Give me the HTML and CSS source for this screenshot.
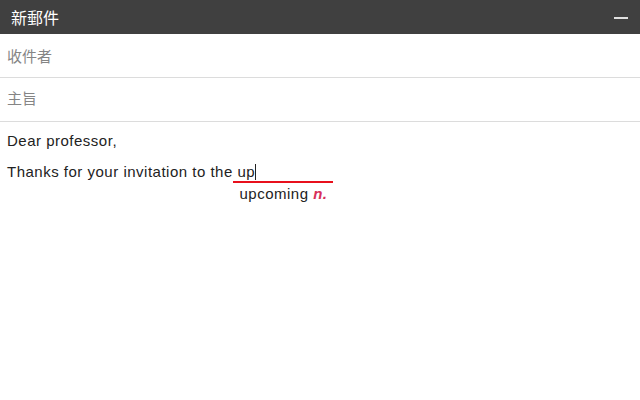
FILE: index.html
```html
<!DOCTYPE html>
<html lang="zh-Hant">
<head>
<meta charset="utf-8">
<link rel="stylesheet" href="styles.css">
</head>
<body>
<div class="compose">
  <div class="header">
    <span class="title">新郵件</span>
    <span class="minimize"></span>
  </div>
  <div class="field">收件者</div>
  <div class="field field-subject">主旨</div>
  <div class="editor">
    <p class="line">Dear professor,</p>
    <p class="line">Thanks for your invitation to the <span class="word">up<span class="caret"></span><span class="suggest">upcoming <em class="pos">n.</em></span></span></p>
  </div>
</div>
</body>
</html>
```
FILE: styles.css
```css
html, body {
  margin: 0;
  padding: 0;
  background: #ffffff;
}
body {
  font-family: "Liberation Sans", Arial, "Noto Sans CJK TC", sans-serif;
  width: 640px;
  height: 400px;
  overflow: hidden;
}
.compose {
  display: flex;
  flex-direction: column;
}
.header {
  height: 34px;
  background: #404040;
  display: flex;
  align-items: center;
  justify-content: space-between;
  padding: 0 12px 0 11px;
}
.title {
  color: #ffffff;
  font-family: "Noto Sans CJK TC", sans-serif;
  font-size: 16px;
}
.minimize {
  width: 14px;
  height: 2px;
  background: #e0e0e0;
  margin-top: 1px;
}
.field {
  height: 43px;
  display: flex;
  align-items: center;
  padding-left: 7px;
  color: #858585;
  font-family: "Noto Sans CJK TC", sans-serif;
  font-size: 15px;
  line-height: 20px;
  border-bottom: 1px solid #dcdcdc;
}
.field-subject {
  padding-bottom: 3px;
  height: 40px;
}
.editor {
  padding: 9px 7px;
  color: #222222;
  font-size: 15px;
  line-height: 20px;
  letter-spacing: 0.5px;
}
.line {
  margin: 0 0 11px 0;
}
.word {
  position: relative;
}
.caret {
  display: inline-block;
  width: 1px;
  height: 16px;
  background: #222;
  vertical-align: -3px;
}
.suggest {
  position: absolute;
  left: -4px;
  top: 18px;
  width: 94px;
  border-top: 2px solid #e8101c;
  padding: 1px 0 0 6px;
  white-space: nowrap;
  color: #222;
}
.pos {
  color: #d8305a;
  font-weight: bold;
  font-style: italic;
}
```
